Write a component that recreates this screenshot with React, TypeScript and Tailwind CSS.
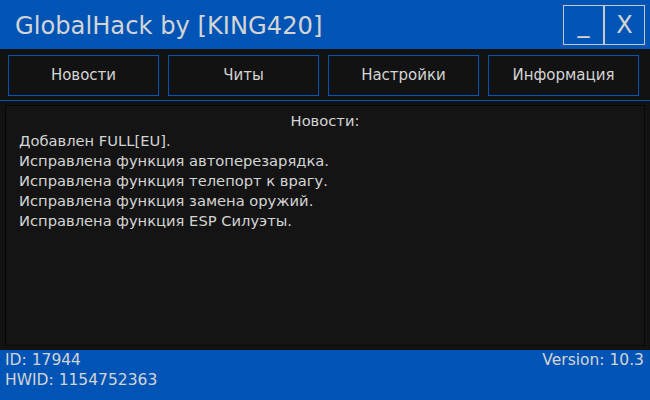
export default function App() {
  const news = [
    "Добавлен FULL[EU].",
    "Исправлена функция автоперезарядка.",
    "Исправлена функция телепорт к врагу.",
    "Исправлена функция замена оружий.",
    "Исправлена функция ESP Силуэты.",
  ];
  const tabs = ["Новости", "Читы", "Настройки", "Информация"];

  return (
    <div className="flex h-[400px] w-[650px] flex-col bg-[#121212] font-['DejaVu_Sans',sans-serif] text-[#d4d4d4]">
      <div className="flex h-[49px] shrink-0 items-start justify-between bg-[#0054b6]">
        <div className="pl-[15px] pt-[12px] text-[24.2px] leading-[28px]">GlobalHack by [KING420]</div>
        <div className="mr-[5px] mt-[5px] flex">
          <div className="flex h-[40px] w-[41px] items-center justify-center border border-[#c8c8c8] pb-[2px] text-[24px]">_</div>
          <div className="flex h-[40px] w-[41px] items-center justify-center border border-[#c8c8c8] text-[24px]">X</div>
        </div>
      </div>

      <div className="mt-[6px] flex gap-[9px] px-[8px]">
        {tabs.map((t) => (
          <div key={t} className="flex h-[41px] w-[151px] items-center justify-center border border-[#0054b6] text-[15px]">
            {t}
          </div>
        ))}
      </div>

      <div className="mt-[4px] h-px bg-[#0054b6]" />

      <div className="mx-[5px] mt-[4px] h-[241px] border border-[#070707] bg-[#141414] px-[13px] pt-[5px] text-[14.7px] leading-[20px]">
        <div className="text-center">Новости:</div>
        {news.map((n) => (
          <div key={n}>{n}</div>
        ))}
      </div>

      <div className="mt-[4px] flex flex-1 justify-between bg-[#0054b6] pl-[5px] pr-[6px] text-[15.5px] leading-[20px]">
        <div>
          <div>ID: 17944</div>
          <div>HWID: 1154752363</div>
        </div>
        <div>Version: 10.3</div>
      </div>
    </div>
  );
}
